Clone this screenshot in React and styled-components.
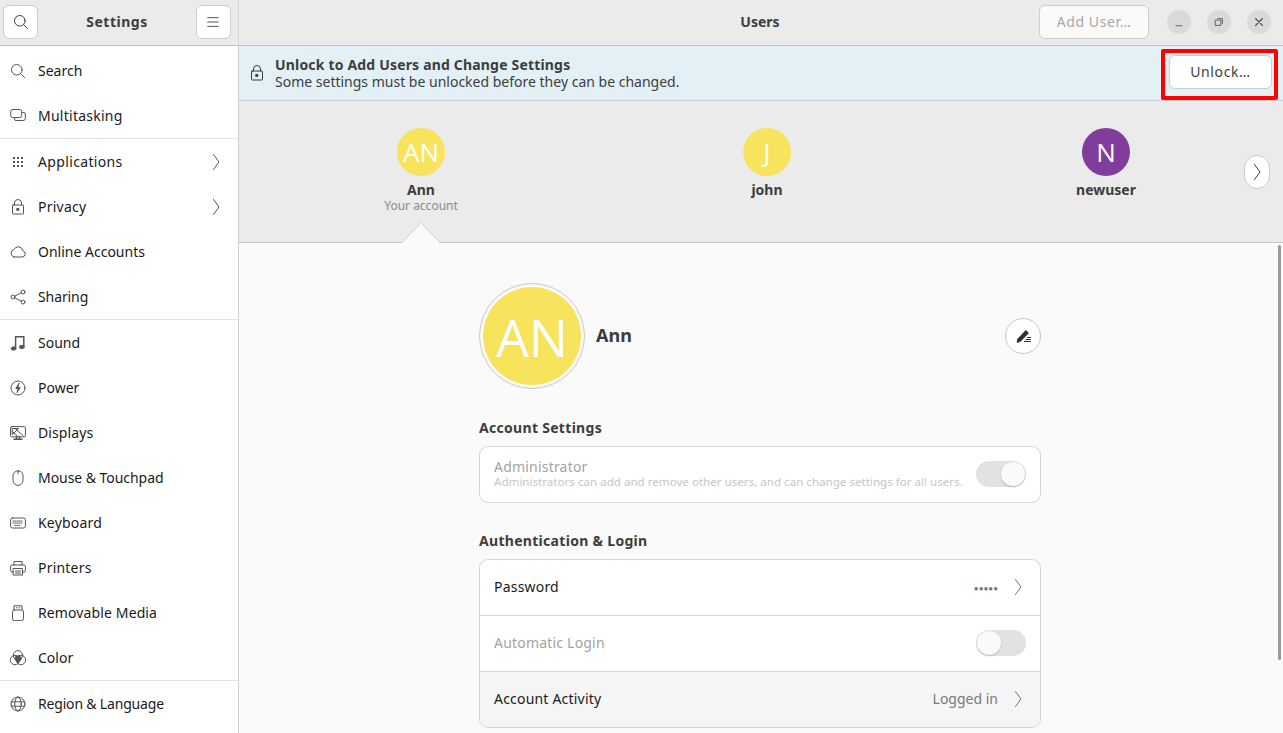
import React from 'react';
import styled, { createGlobalStyle } from 'styled-components';

const GlobalStyle = createGlobalStyle`
  html, body {
    margin: 0;
    padding: 0;
    height: 100%;
    overflow: hidden;
    background: #fafafa;
  }
  body {
    font-family: "Noto Sans", "Liberation Sans", sans-serif;
    font-size: 14px;
    color: #3d3d3d;
  }
  * {
    box-sizing: border-box;
  }
`;

const Window = styled.div`
  display: flex;
  flex-direction: column;
  width: 1283px;
  height: 733px;
  position: relative;
  overflow: hidden;
`;

const HeaderBar = styled.header`
  display: flex;
  flex: none;
  height: 46px;
  background: #ebebeb;
  border-bottom: 1px solid #bfbfbf;
`;

const SideHeader = styled.div`
  display: flex;
  align-items: center;
  justify-content: space-between;
  width: 239px;
  padding: 0 7px 2px 3px;
  border-right: 1px solid #d6d6d6;
`;

const HeaderTitle = styled.div`
  font-weight: 700;
  font-size: 14px;
  letter-spacing: 0.5px;
  color: #3d3d3d;
  text-align: center;
`;

const MainHeader = styled.div`
  flex: 1;
  display: flex;
  align-items: center;
  justify-content: flex-end;
  padding: 0 12px 2px 0;
  position: relative;
`;

const CenterTitle = styled(HeaderTitle)`
  position: absolute;
  left: 0;
  right: 2px;
  top: 12px;
  letter-spacing: 0;
`;

const Button = styled.button`
  display: flex;
  align-items: center;
  justify-content: center;
  width: ${(p) => p.$width || 35}px;
  height: 34px;
  padding: 0;
  background: #ffffff;
  border: 1px solid #cdcdcd;
  border-radius: 6px;
  font-family: inherit;
  font-size: 14px;
  letter-spacing: 0.6px;
  color: ${(p) => (p.$disabled ? '#a8a8a8' : '#3d3d3d')};
  flex: none;
`;

const AddUser = styled(Button)`
  background: #fafafa;
  margin-right: 18px;
`;

const WindowButton = styled.div`
  display: flex;
  align-items: center;
  justify-content: center;
  width: 24px;
  height: 24px;
  border-radius: 50%;
  background: #dadada;
  margin-left: ${(p) => (p.$first ? 0 : 16)}px;
  color: #3d3d3d;
`;

const Body = styled.div`
  flex: 1;
  display: flex;
  min-height: 0;
`;

const Sidebar = styled.nav`
  width: 239px;
  flex: none;
  background: #ffffff;
  border-right: 1px solid #d0d0d0;
  padding-top: 2px;
`;

const SideRow = styled.div`
  display: flex;
  align-items: center;
  height: 45px;
  padding: 0 14px 0 10px;
  color: #1a1a1a;
`;

const SideDivider = styled.div`
  height: 1px;
  background: #e2e2e2;
`;

const SideIcon = styled.span`
  display: flex;
  width: 28px;
  flex: none;
  color: #555555;
`;

const SideLabel = styled.span`
  flex: 1;
  letter-spacing: ${(p) => p.$track || 0}px;
`;

const SideChevron = styled.span`
  display: flex;
  color: #555555;
`;

const Icon = styled.svg`
  display: block;
  flex: none;
  width: ${(p) => p.$size || 16}px;
  height: ${(p) => p.$size || 16}px;
  fill: none;
  stroke: currentColor;
  stroke-width: 1;
  stroke-linecap: round;
  stroke-linejoin: round;
`;

const Main = styled.main`
  flex: 1;
  display: flex;
  flex-direction: column;
  min-width: 0;
  background: #fafafa;
`;

const Banner = styled.div`
  display: flex;
  flex: none;
  align-items: center;
  height: 55px;
  background: #e3f0f5;
  border-bottom: 1px solid #cfcfcf;
  padding: 0 11px 9px 10px;
  color: #3d3d3d;
`;

const BannerLock = styled(Icon)`
  margin-top: 9px;
`;

const BannerText = styled.div`
  flex: 1;
  margin-left: 10px;
  padding-top: 9px;
  line-height: 17px;
`;

const BannerTitle = styled.div`
  font-weight: 700;
  letter-spacing: 0.18px;
`;

const BannerButton = styled(Button)`
  margin-top: 6px;
`;

const Highlight = styled.div`
  position: absolute;
  left: 1161px;
  top: 49px;
  width: 117px;
  height: 51px;
  border: 4px solid #ff0000;
  border-radius: 2px;
  pointer-events: none;
`;

const Carousel = styled.div`
  display: flex;
  flex: none;
  height: 142px;
  background: #ebebeb;
  border-bottom: 1px solid #c4c4c4;
  position: relative;
`;

const UserColumn = styled.div`
  display: flex;
  flex-direction: column;
  align-items: center;
  width: ${(p) => p.$width}px;
  padding-top: 27px;
`;

const SmallAvatar = styled.div`
  display: flex;
  align-items: center;
  justify-content: center;
  width: 48px;
  height: 48px;
  border-radius: 50%;
  background: ${(p) => p.$color};
  color: #ffffff;
  font-family: "Open Sans", "Liberation Sans", sans-serif;
  font-weight: 400;
  font-size: 26px;
`;

const UserName = styled.div`
  margin-top: 4px;
  font-weight: 700;
  line-height: 20px;
`;

const UserNote = styled.div`
  margin-top: -2px;
  font-size: 12px;
  line-height: 15px;
  color: #8a8a8a;
`;

const NextButton = styled.div`
  display: flex;
  align-items: center;
  justify-content: center;
  position: absolute;
  left: 1005px;
  top: 54px;
  width: 26px;
  height: 34px;
  border-radius: 13px;
  background: #ffffff;
  border: 1px solid #cccccc;
  color: #3d3d3d;
`;

const Notch = styled.svg`
  position: absolute;
  left: 162px;
  bottom: -1px;
  width: 40px;
  height: 21px;
`;

const Scroller = styled.div`
  flex: 1;
  overflow: hidden;
  display: flex;
  flex-direction: column;
  width: 562px;
  align-self: flex-start;
  margin-left: 240px;
  padding-top: 40px;
`;

const Profile = styled.div`
  display: flex;
  align-items: center;
  height: 106px;
  flex: none;
`;

const BigAvatarRing = styled.div`
  display: flex;
  align-items: center;
  justify-content: center;
  width: 106px;
  height: 106px;
  border-radius: 50%;
  border: 1px solid #c8c8c8;
  flex: none;
`;

const BigAvatar = styled(SmallAvatar)`
  width: 98px;
  height: 98px;
  font-size: 52px;
`;

const ProfileName = styled.div`
  flex: 1;
  margin-left: 11px;
  padding-bottom: 2px;
  font-size: 18px;
  font-weight: 700;
`;

const EditButton = styled.div`
  display: flex;
  align-items: center;
  justify-content: center;
  width: 36px;
  height: 36px;
  border-radius: 50%;
  background: #ffffff;
  border: 1px solid #c8c8c8;
  color: #2e2e2e;
`;

const SectionTitle = styled.h2`
  margin: ${(p) => p.$top}px 0 8px;
  font-size: 14px;
  line-height: 20px;
  font-weight: 700;
  letter-spacing: 0.3px;
  color: #3d3d3d;
`;

const Card = styled.div`
  flex: none;
  background: #ffffff;
  border: 1px solid #d6d6d6;
  border-radius: 9px;
  overflow: hidden;
`;

const Row = styled.div`
  display: flex;
  align-items: center;
  height: ${(p) => (p.$divided ? 56 : 55)}px;
  padding: 0 14px ${(p) => (p.$divided ? 2 : 1)}px;
  background: ${(p) => (p.$shade ? '#f5f5f5' : 'transparent')};
  border-top: ${(p) => (p.$divided ? '1px solid #d8d8d8' : 'none')};
  color: ${(p) => (p.$dim ? '#a3a3a3' : '#1a1a1a')};
`;

const RowText = styled.div`
  flex: 1;
  line-height: 15px;
  letter-spacing: 0.2px;
  padding-bottom: ${(p) => (p.$lift ? 1 : 0)}px;
`;

const RowNote = styled.div`
  font-size: 11.6px;
  letter-spacing: 0;
  color: #c2c8c4;
`;

const RowValue = styled.span`
  color: #7a7a7a;
  margin-right: 12px;
`;

const Dots = styled(RowValue)`
  font-size: 8px;
`;

const RowChevron = styled.span`
  display: flex;
  color: #707070;
`;

const Toggle = styled.div`
  display: flex;
  justify-content: ${(p) => (p.$on ? 'flex-end' : 'flex-start')};
  width: 50px;
  height: 26px;
  border-radius: 13px;
  background: #e2e2e2;
  flex: none;
`;

const Knob = styled.div`
  width: 24px;
  height: 24px;
  margin: 1px;
  border-radius: 50%;
  background: #fafafa;
  box-shadow: 0 1px 2px rgba(0, 0, 0, 0.2);
`;

const ScrollThumb = styled.div`
  position: absolute;
  left: 1278px;
  top: 245px;
  width: 3px;
  height: 415px;
  border-radius: 2px;
  background: #9a9a9a;
`;

const Search = () => (
  <>
    <circle cx="6.8" cy="6.8" r="5.3" />
    <path d="M10.8 10.8 14.6 14.6" />
  </>
);

const Chevron = () => (
  <Icon viewBox="0 0 16 16">
    <path d="M5.5 0.5 11 8 5.5 15.5" />
  </Icon>
);

const Lock = () => (
  <>
    <rect x="2.5" y="6" width="11" height="9" rx="0.6" />
    <path d="M4.5 6V4a3.5 3.5 0 0 1 7 0v2" />
    <rect x="7.1" y="9.5" width="1.8" height="1.8" fill="currentColor" />
  </>
);

const sideIcons = {
  search: <Search />,
  multitasking: (
    <>
      <rect x="0.7" y="1.5" width="11" height="8" rx="2" />
      <path d="M12.5 4.5h1.3a1.5 1.5 0 0 1 1.5 1.5v4.5a2 2 0 0 1-2 2H6a1.5 1.5 0 0 1-1.5-1.5v-.7" />
    </>
  ),
  applications: (
    <g fill="currentColor" stroke="none">
      {[3, 7, 11].map((y) =>
        [3, 7, 11].map((x) => <rect key={`${x}-${y}`} x={x} y={y} width="2" height="2" />)
      )}
    </g>
  ),
  privacy: <Lock />,
  online: (
    <path d="M4 13h8.2a3.2 3.2 0 0 0 .6-6.3A4.6 4.6 0 0 0 4 5.6 3.8 3.8 0 0 0 4 13z" />
  ),
  sharing: (
    <>
      <circle cx="3" cy="8" r="2" />
      <circle cx="13" cy="3" r="2" />
      <circle cx="13" cy="13" r="2" />
      <path d="M4.8 7.1 11.2 3.9M4.8 8.9l6.4 3.2" />
    </>
  ),
  sound: (
    <>
      <path d="M5.6 13.5V1.8h8.2v10" strokeWidth="1.5" />
      <ellipse cx="3.6" cy="13.5" rx="2.3" ry="1.7" fill="currentColor" />
      <ellipse cx="11.8" cy="12" rx="2.3" ry="1.7" fill="currentColor" />
    </>
  ),
  power: (
    <>
      <circle cx="8" cy="8" r="7" />
      <path d="M9 3.5 5.8 8.6h2.3L7 12.5l3.2-5.1H8z" fill="currentColor" />
    </>
  ),
  displays: (
    <>
      <rect x="0.6" y="1.6" width="14.8" height="10.2" rx="1" />
      <path d="M2.5 3.5h6l-6 6zM2.5 6.5l5.5 5M5 3.5l8 7" />
      <path d="M6.5 12v1.5M9.5 12v1.5M4 14.3h8" strokeWidth="1.4" />
    </>
  ),
  mouse: (
    <>
      <rect x="3" y="0.8" width="10" height="14.6" rx="5" />
      <path d="M8 0.8v3" />
    </>
  ),
  keyboard: (
    <>
      <rect x="0.6" y="3" width="14.8" height="10" rx="1.8" />
      <path d="M3 6h10M3 8h10M5 10.4h6" strokeDasharray="1 1" />
    </>
  ),
  printers: (
    <>
      <path d="M4 5V1.5h8V5" />
      <path d="M3.5 12H2a1.4 1.4 0 0 1-1.4-1.4V6.4A1.4 1.4 0 0 1 2 5h12a1.4 1.4 0 0 1 1.4 1.4v4.2A1.4 1.4 0 0 1 14 12h-1.5" />
      <rect x="3.5" y="8.5" width="9" height="6.5" />
      <path d="M5.5 11h5M5.5 13h5" />
    </>
  ),
  removable: (
    <>
      <rect x="2.5" y="5" width="11" height="10.6" rx="1.8" />
      <path d="M4 5V0.8h8V5M6.5 2.8h.8M9 2.8h.8" />
    </>
  ),
  color: (
    <>
      <circle cx="8" cy="5.3" r="4.7" />
      <circle cx="5" cy="10" r="4.7" />
      <circle cx="11" cy="10" r="4.7" />
      <path d="M5 6.5 8 5l3 1.5.5 3-3.5 4-3.5-4z" fill="currentColor" stroke="none" />
    </>
  ),
  region: (
    <>
      <circle cx="8" cy="8" r="7" />
      <ellipse cx="8" cy="8" rx="3.2" ry="7" />
      <path d="M1.3 5.8h13.4M1.3 10.2h13.4" />
    </>
  ),
};

const sideGroups = [
  [
    { icon: 'search', label: 'Search' },
    { icon: 'multitasking', label: 'Multitasking', track: 0.25 },
  ],
  [
    { icon: 'applications', label: 'Applications', more: true, track: 0.35 },
    { icon: 'privacy', label: 'Privacy', more: true, track: 0.25 },
    { icon: 'online', label: 'Online Accounts' },
    { icon: 'sharing', label: 'Sharing', track: -0.1 },
  ],
  [
    { icon: 'sound', label: 'Sound' },
    { icon: 'power', label: 'Power' },
    { icon: 'displays', label: 'Displays', track: 0.1 },
    { icon: 'mouse', label: 'Mouse & Touchpad', track: -0.05 },
    { icon: 'keyboard', label: 'Keyboard', track: 0.2 },
    { icon: 'printers', label: 'Printers', track: 0.2 },
    { icon: 'removable', label: 'Removable Media', track: 0.12 },
    { icon: 'color', label: 'Color' },
  ],
  [{ icon: 'region', label: 'Region & Language', track: -0.18 }],
];

export default function App() {
  return (
    <Window>
      <GlobalStyle />
      <HeaderBar>
        <SideHeader>
          <Button>
            <Icon viewBox="0 0 16 16">
              <Search />
            </Icon>
          </Button>
          <HeaderTitle>Settings</HeaderTitle>
          <Button>
            <Icon viewBox="0 0 16 16" $size={14}>
              <path d="M2 3h12M2 8h12M2 13h12" />
            </Icon>
          </Button>
        </SideHeader>
        <MainHeader>
          <CenterTitle>Users</CenterTitle>
          <AddUser $width={110} $disabled>
            Add User…
          </AddUser>
          <WindowButton $first>
            <Icon viewBox="0 0 16 16" $size={12}>
              <path d="M4 13h8" />
            </Icon>
          </WindowButton>
          <WindowButton>
            <Icon viewBox="0 0 16 16" $size={12}>
              <rect x="3.5" y="5.5" width="7" height="7" />
              <path d="M6 3.5h6.5V10" />
            </Icon>
          </WindowButton>
          <WindowButton>
            <Icon viewBox="0 0 16 16" $size={12}>
              <path d="M3.5 3.5l9 9M12.5 3.5l-9 9" strokeWidth="1.5" />
            </Icon>
          </WindowButton>
        </MainHeader>
      </HeaderBar>

      <Body>
        <Sidebar>
          {sideGroups.map((group, i) => (
            <React.Fragment key={i}>
              {i > 0 && <SideDivider />}
              {group.map(({ icon, label, more, track }) => (
                <SideRow key={label}>
                  <SideIcon>
                    <Icon viewBox="0 0 16 16">{sideIcons[icon]}</Icon>
                  </SideIcon>
                  <SideLabel $track={track}>{label}</SideLabel>
                  {more && (
                    <SideChevron>
                      <Chevron />
                    </SideChevron>
                  )}
                </SideRow>
              ))}
            </React.Fragment>
          ))}
        </Sidebar>

        <Main>
          <Banner>
            <BannerLock viewBox="0 0 16 16">
              <Lock />
            </BannerLock>
            <BannerText>
              <BannerTitle>Unlock to Add Users and Change Settings</BannerTitle>
              <div>Some settings must be unlocked before they can be changed.</div>
            </BannerText>
            <BannerButton $width={103}>Unlock…</BannerButton>
          </Banner>

          <Carousel>
            <UserColumn $width={364}>
              <SmallAvatar $color="#f8e45c">AN</SmallAvatar>
              <UserName>Ann</UserName>
              <UserNote>Your account</UserNote>
            </UserColumn>
            <UserColumn $width={328}>
              <SmallAvatar $color="#f8e45c">J</SmallAvatar>
              <UserName>john</UserName>
            </UserColumn>
            <UserColumn $width={350}>
              <SmallAvatar $color="#813d9c">N</SmallAvatar>
              <UserName>newuser</UserName>
            </UserColumn>
            <NextButton>
              <Chevron />
            </NextButton>
            <Notch viewBox="0 0 40 21">
              <path d="M1 21 20 1l19 20z" fill="#fafafa" />
              <path d="M1 20.5 20 1l19 19.5" fill="none" stroke="#d0d0d0" />
            </Notch>
          </Carousel>

          <Scroller>
            <Profile>
              <BigAvatarRing>
                <BigAvatar $color="#f8e45c">AN</BigAvatar>
              </BigAvatarRing>
              <ProfileName>Ann</ProfileName>
              <EditButton>
                <Icon viewBox="0 0 16 16">
                  <path d="M2.2 14l.6-3L10.8 2.6l2.6 2.4L5.2 13.4z" fill="currentColor" />
                  <path d="M9.5 13.5h6M11 11.5h4.5M12.5 9.5h3" />
                </Icon>
              </EditButton>
            </Profile>

            <SectionTitle $top={29}>Account Settings</SectionTitle>
            <Card>
              <Row $dim>
                <RowText>
                  Administrator
                  <RowNote>
                    Administrators can add and remove other users, and can change settings for all users.
                  </RowNote>
                </RowText>
                <Toggle $on>
                  <Knob />
                </Toggle>
              </Row>
            </Card>

            <SectionTitle $top={28}>Authentication &amp; Login</SectionTitle>
            <Card>
              <Row>
                <RowText $lift>Password</RowText>
                <Dots>●●●●●</Dots>
                <RowChevron>
                  <Chevron />
                </RowChevron>
              </Row>
              <Row $divided $dim>
                <RowText>Automatic Login</RowText>
                <Toggle>
                  <Knob />
                </Toggle>
              </Row>
              <Row $divided $shade>
                <RowText>Account Activity</RowText>
                <RowValue>Logged in</RowValue>
                <RowChevron>
                  <Chevron />
                </RowChevron>
              </Row>
            </Card>
          </Scroller>
        </Main>
      </Body>
      <Highlight />
      <ScrollThumb />
    </Window>
  );
}
